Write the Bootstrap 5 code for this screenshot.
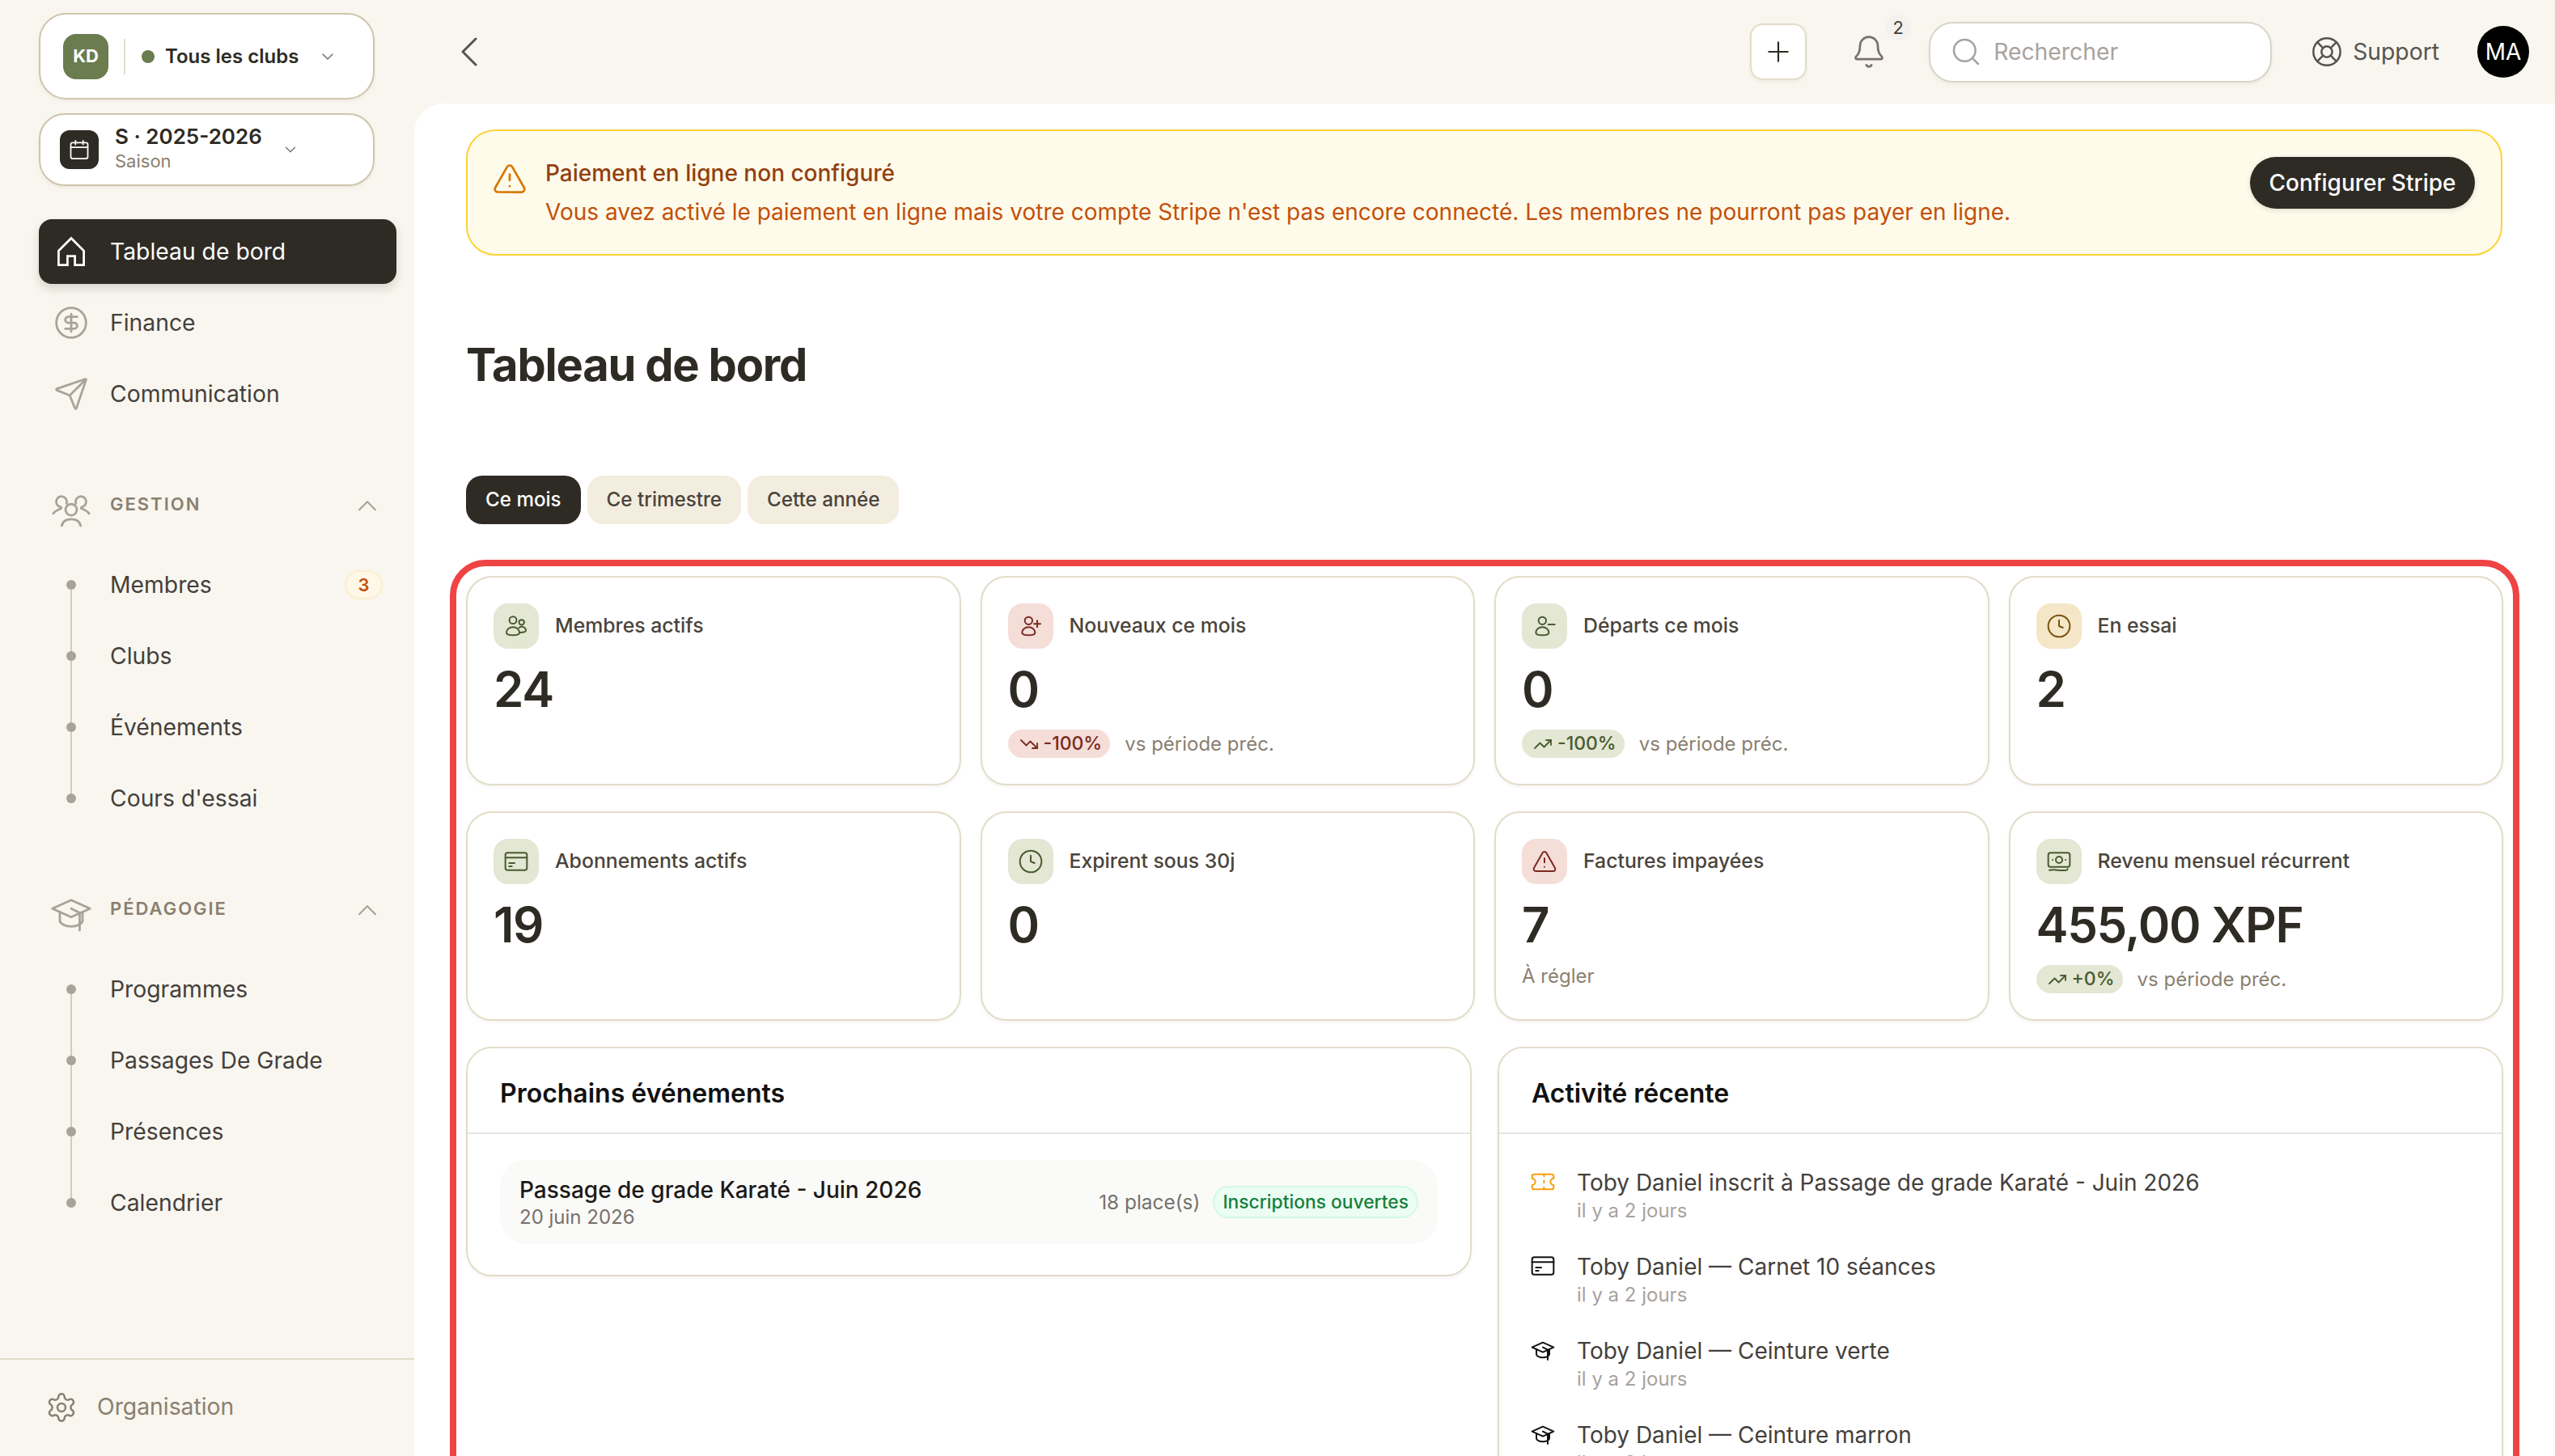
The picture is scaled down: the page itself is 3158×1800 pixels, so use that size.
<!DOCTYPE html>
<html lang="fr">
<head>
<meta charset="utf-8">
<title>Tableau de bord</title>
<link href="https://cdn.jsdelivr.net/npm/bootstrap@5.3.0/dist/css/bootstrap.min.css" rel="stylesheet">
<style>
html,body{height:100%;margin:0}
body{font-family:"Inter","Liberation Sans",sans-serif;background:#f9f6ef;color:#2e2b24;overflow:hidden}
.ic{fill:none;stroke:currentColor;stroke-width:1.5;stroke-linecap:round;stroke-linejoin:round;flex:none}
.sym-defs{width:0;height:0;position:absolute}
.shell{height:1800px}
.side{width:512px;flex:none;height:1800px}
.side-top{padding:16px 22px 0 48px}
.pick{width:415px;background:#fff;border:2px solid #cfc5ab;box-shadow:0 2px 4px rgba(46,43,36,.06)}
.pick-club{height:107px;border-radius:34px;padding-left:28px}
.club-ava{width:56px;height:56px;border-radius:16px;background:#6b7c4f;color:#fff;font-size:22px;font-weight:700}
.club-sep{width:2px;height:44px;background:#e3dcc8;margin:0 20px 0 19px}
.club-dot{width:16px;height:16px;border-radius:50%;background:#6b7c4f;margin-right:13px}
.club-name{font-size:24px;font-weight:600;color:#2e2b24}
.pick-season{height:90px;border-radius:32px;padding-left:24px;margin-top:17px}
.season-ico{width:48px;height:48px;border-radius:12px;background:#2e2b24;color:#fff;margin-right:20px}
.season-txt{padding-bottom:4px}
.season-name{font-size:26px;font-weight:600;line-height:32px;color:#2e2b24}
.season-sub{font-size:22px;line-height:28px;color:#8a7f70}
.chev{color:#78716c}
.menu{margin-top:41px;gap:8px}
.menu-link{height:80px;border-radius:16px;font-size:28.3px;color:#44403c;padding-left:18px;text-decoration:none}
.menu-link .ic{color:#a8a29a;margin-right:26px;stroke-width:1.5}
.menu-link.on{background:#2e2b24;color:#fff;box-shadow:0 6px 12px rgba(46,43,36,.16)}
.menu-link.on .ic{color:#fff}
.sect-head{height:48px;margin-top:72px;padding-left:12px;padding-right:19px}
.sect-ico{color:#a8a29a;margin-right:20px;margin-top:12px;stroke-width:1.2}
.sect-name{font-size:22px;font-weight:600;letter-spacing:2px;color:#8a7f70}
.sect-caret{margin-left:auto;color:#a8a29a;margin-top:6px}
.sub-list{margin-top:36px;gap:8px;background:linear-gradient(#d0ccc3,#d0ccc3) no-repeat 39px 40px/2px calc(100% - 80px)}
.sub-link{height:80px;font-size:28.3px;color:#44403c;text-decoration:none;padding-left:34px}
.sub-dot{width:12px;height:12px;border-radius:50%;background:#a8a29a;margin-right:42px}
.sub-count{margin-left:auto;margin-right:17px;width:47px;height:36px;background:#fff8e6;border:2px solid #fdeed0;border-radius:18px;color:#c2500a;font-size:22px;font-weight:600;padding:0;line-height:32px}
.side-foot{margin-top:auto;border-top:2px solid #e3dcc8;height:121px;padding-left:56px;padding-bottom:2px;color:#8a7f70;font-size:28.3px}
.side-foot .ic{margin-right:24px}
.side-nav-wrap{flex:1}
.top{height:128px;flex:none;padding-right:32px}
.back{margin-left:56px;color:#57534e}
.add-btn{width:70px;height:70px;border-radius:16px;border:2px solid #e3dcc8;background:#fff;color:#2e2b24;padding:0;box-shadow:0 2px 4px rgba(46,43,36,.06)}
.add-btn .ic{stroke-width:1.3}
.bell-wrap{margin-left:55px;margin-right:52px;color:#78716c}
.bell-num{position:absolute;top:-24px;right:-30px;width:32px;height:32px;border-radius:50%;background:#f3f2ee;color:#44403c;font-size:22px;font-weight:400;padding:0;line-height:32px}
.find{width:424px;height:75px;border-radius:30px;background:#fff;border:2px solid #dad5ca;padding-left:24px;color:#a8a29e;font-size:28.3px;box-shadow:0 2px 4px rgba(46,43,36,.06)}
.find .ic{margin-right:14px}
.help{margin-left:48px;margin-right:47px;font-size:28.3px;color:#57534e}
.help .ic{margin-right:12px}
.me{width:64px;height:64px;border-radius:50%;background:#000;color:#fff;font-size:28px}
.page{flex:1;background:#fff;border-top-left-radius:36px;padding:32px 65px 0 64px;overflow:hidden;min-width:0}
.warn{height:156px;background:#fffbeb;border:2px solid #fdd235;border-radius:36px;padding:0 32px 0 30px;margin-bottom:0}
.warn-ico{color:#d97706;margin-right:22px;align-self:flex-start;margin-top:37px}
.warn-title{font-size:28px;font-weight:500;color:#92400e;line-height:40px}
.warn-text{font-size:28px;color:#c2500a;line-height:40px;margin-top:8px}
.warn-btn{background:#2e2b24;color:#fff;border:0;border-radius:32px;height:64px;width:278px;font-size:28px;font-weight:500;padding:0;margin-left:auto;margin-top:-24px;box-shadow:0 2px 6px rgba(46,43,36,.15)}
.head-title{font-size:56px;font-weight:700;letter-spacing:-1.2px;color:#2e2b24;line-height:72px;margin:99px 0 0 0}
.ranges{margin-top:101px;gap:8px}
.range{height:60px;border-radius:20px;padding:0 24px;font-size:24.2px;font-weight:500;background:#f3ede0;color:#4a443b;border:0}
.range.on{background:#2e2b24;color:#fff}
.frame{margin:44px -21px 0 -20px;border:8px solid #ef4444;border-radius:44px;padding:12px;height:1200px}
.stats{--bs-gutter-x:24px;--bs-gutter-y:32px}
.tile{border:2px solid #e3dcc8;border-radius:32px;padding:32px;box-shadow:0 2px 4px rgba(46,43,36,.05)}
.tile-ico{width:56px;height:56px;border-radius:18px;margin-right:20px}
.tone-g{background:#e3e7d3;color:#4a5a30}
.tone-r{background:#f5ddd8;color:#7a2a20}
.tone-y{background:#f5e6c8;color:#7a5210}
.tile-label{font-size:24.8px;font-weight:500;color:#4a443b}
.tile-val{font-size:60px;font-weight:600;letter-spacing:-1.3px;line-height:72px;margin-top:14px;color:#2e2b24}
.delta-row{margin-top:14px;height:35px}
.delta{height:35px;border-radius:18px;padding:0 10px 0 14px;font-size:23px;font-weight:500;gap:6px}
.delta .ic{stroke-width:1.8}
.delta-note{font-size:24px;color:#8a7f70;margin-left:18px}
.tile-note{font-size:24px;line-height:36px;margin-top:10px;color:#8a7f70}
.lower{--bs-gutter-x:32px;--bs-gutter-y:0;margin-top:32px}
.panel{border:2px solid #e3dcc8;border-radius:32px;overflow:hidden;box-shadow:0 2px 4px rgba(46,43,36,.05)}
.panel-head{background:#fff;border-bottom:2px solid #e7e5e4;height:106px;padding:8px 40px 0;border-radius:0}
.panel-title{font-size:32px;font-weight:600;color:#111;margin:0}
.panel-body{padding:32px 40px 38px}
.event{height:104px;background:#fafaf8;border-radius:32px;padding:0 24px}
.event-name{font-size:28px;font-weight:500;color:#1c1917;line-height:38px}
.event-date{font-size:24px;color:#78716c;line-height:30px}
.event-seats{font-size:24.4px;color:#78716c;margin-right:16px}
.event-state{height:40px;border-radius:20px;background:#ecfdf3;border:2px solid #d1fae5;color:#15803d;font-size:22.8px;font-weight:500;padding:0 10px;line-height:36px}
.feed{gap:18px}
.feed-item{padding:8px 0;gap:26px}
.feed-ico{margin-top:3px;margin-left:-2px;color:#111}
.feed-ico.orange{color:#f59e0b}
.feed-text{font-size:28px;color:#44403c;line-height:40px}
.feed-when{font-size:24px;color:#a8a29e;line-height:30px}
.panel-wide{height:1000px}
</style>
</head>
<body>
<svg class="sym-defs" aria-hidden="true">
  <symbol id="i-home" viewBox="0 0 24 24"><path d="M3.5 11.5 12 3l8.5 8.5V21h-6v-6h-5v6h-6z" stroke-linejoin="miter"/></symbol>
  <symbol id="i-dollar" viewBox="0 0 24 24"><circle cx="12" cy="12" r="10"/><path d="M16 8h-6a2 2 0 1 0 0 4h4a2 2 0 1 1 0 4H8"/><path d="M12 18V6"/></symbol>
  <symbol id="i-send" viewBox="0 0 24 24"><path d="M14.536 21.686a.5.5 0 0 0 .937-.024l6.5-19a.496.496 0 0 0-.635-.635l-19 6.5a.5.5 0 0 0-.024.937l7.93 3.18a2 2 0 0 1 1.112 1.11z"/><path d="m21.854 2.147-10.94 10.939"/></symbol>
  <symbol id="i-team" viewBox="0 0 24 24"><circle cx="12" cy="12.500" r="3"/><path d="M7 21c.5-2.500 2.500-3.500 5-3.500s4.500 1 5 3.500"/><path d="M9.500 9.200A2.800 2.800 0 1 0 6.300 11c.6.300.6.800 0 1-1.500.500-2.800 1.200-3.800 2.500"/><path d="M14.500 9.200a2.800 2.800 0 1 1 3.200 1.800c-.6.300-.6.800 0 1 1.500.500 2.800 1.200 3.800 2.500"/></symbol>
  <symbol id="i-cap" viewBox="0 0 24 24"><path d="M2 9.500 12 5l10 4.500L12 14z"/><path d="M6 11.500V16c0 1.500 3 3 6 3 3 0 6-1.500 6-3v-4.500"/><path d="m12 9.500 4.500 2.300V21"/></symbol>
  <symbol id="i-gear" viewBox="0 0 24 24"><path d="M12.220 2h-.44a2 2 0 0 0-2 2v.18a2 2 0 0 1-1 1.730l-.43.25a2 2 0 0 1-2 0l-.15-.08a2 2 0 0 0-2.730.73l-.22.38a2 2 0 0 0 .73 2.730l.15.1a2 2 0 0 1 1 1.720v.51a2 2 0 0 1-1 1.740l-.15.09a2 2 0 0 0-.73 2.730l.22.38a2 2 0 0 0 2.730.73l.15-.08a2 2 0 0 1 2 0l.43.25a2 2 0 0 1 1 1.730V20a2 2 0 0 0 2 2h.44a2 2 0 0 0 2-2v-.18a2 2 0 0 1 1-1.730l.43-.25a2 2 0 0 1 2 0l.15.08a2 2 0 0 0 2.730-.73l.22-.39a2 2 0 0 0-.73-2.730l-.15-.08a2 2 0 0 1-1-1.740v-.5a2 2 0 0 1 1-1.740l.15-.09a2 2 0 0 0 .73-2.730l-.22-.38a2 2 0 0 0-2.730-.73l-.15.08a2 2 0 0 1-2 0l-.43-.25a2 2 0 0 1-1-1.730V4a2 2 0 0 0-2-2z"/><circle cx="12" cy="12" r="3"/></symbol>
  <symbol id="i-down" viewBox="0 0 24 24"><path d="m6 9 6 6 6-6"/></symbol>
  <symbol id="i-up" viewBox="0 0 24 24"><path d="m5 15 7-7 7 7"/></symbol>
  <symbol id="i-cal" viewBox="0 0 24 24"><rect x="3" y="4.500" width="18" height="17" rx="2"/><path d="M3 9.500h18M8 2.500v4M16 2.500v4"/></symbol>
  <symbol id="i-plus" viewBox="0 0 24 24"><path d="M5 12h14M12 5v14"/></symbol>
  <symbol id="i-bell" viewBox="0 0 24 24"><path d="M10.268 21a2 2 0 0 0 3.464 0"/><path d="M3.262 15.326A1 1 0 0 0 4 17h16a1 1 0 0 0 .74-1.673C19.410 13.956 18 12.499 18 8A6 6 0 0 0 6 8c0 4.499-1.411 5.956-2.738 7.326"/></symbol>
  <symbol id="i-search" viewBox="0 0 24 24"><circle cx="11" cy="11" r="8"/><path d="m21 21-4.300-4.300"/></symbol>
  <symbol id="i-buoy" viewBox="0 0 24 24"><circle cx="12" cy="12" r="10"/><circle cx="12" cy="12" r="4"/><path d="m4.930 4.930 4.240 4.240M14.830 9.170l4.240-4.240M14.830 14.830l4.240 4.240M9.170 14.830l-4.240 4.240"/></symbol>
  <symbol id="i-alert" viewBox="0 0 24 24"><path d="m21.730 18-8-14a2 2 0 0 0-3.480 0l-8 14A2 2 0 0 0 4 21h16a2 2 0 0 0 1.730-3"/><path d="M12 9v4M12 17h.01"/></symbol>
  <symbol id="i-users" viewBox="0 0 24 24"><circle cx="9" cy="6.500" r="3.300"/><circle cx="17" cy="8.500" r="2.400"/><path d="M3 18c0-3 2.700-5 6-5s6 2 6 5c0 1.500-2.500 2.500-6 2.500S3 19.500 3 18z"/><path d="M14.500 13.600c.7-.7 1.600-1.100 2.700-1.100 2.200 0 3.800 1.700 3.800 3.500 0 1.400-2 2-5.300 2"/></symbol>
  <symbol id="i-uplus" viewBox="0 0 24 24"><circle cx="10" cy="7" r="3.500"/><path d="M4 18c0-3 2.700-5 6-5s6 2 6 5c0 1.500-2.500 2.500-6 2.500S4 19.500 4 18z"/><path d="M18 7v6M15 10h6"/></symbol>
  <symbol id="i-uminus" viewBox="0 0 24 24"><circle cx="10" cy="7" r="3.500"/><path d="M4 18c0-3 2.700-5 6-5s6 2 6 5c0 1.500-2.500 2.500-6 2.500S4 19.500 4 18z"/><path d="M15.500 10.500h6"/></symbol>
  <symbol id="i-clock" viewBox="0 0 24 24"><circle cx="12" cy="12" r="10"/><path d="M12 6.500V12l3.500 1.500"/></symbol>
  <symbol id="i-card" viewBox="0 0 24 24"><rect x="2" y="4" width="20" height="16" rx="2"/><path d="M2 8.500h20M5.500 13.500h5M5.500 16.500h2.500"/></symbol>
  <symbol id="i-money" viewBox="0 0 24 24"><rect x="2" y="4" width="20" height="13" rx="2"/><circle cx="12" cy="10.500" r="3"/><path d="M6 10.500h.01M18 10.500h.01M3 20c5-1 9 .8 15 .2 1 0 2-.7 2-1.200"/></symbol>
  <symbol id="i-trup" viewBox="0 0 24 24"><path d="M22 7l-8.500 8.500-5-5L2 17"/><path d="M16 7h6v6"/></symbol>
  <symbol id="i-trdown" viewBox="0 0 24 24"><path d="m22 17-8.500-8.500-5 5L2 7"/><path d="M16 17h6v-6"/></symbol>
  <symbol id="i-ticket" viewBox="0 0 24 24"><path d="M2 9a3 3 0 0 1 0 6v2a2 2 0 0 0 2 2h16a2 2 0 0 0 2-2v-2a3 3 0 0 1 0-6V7a2 2 0 0 0-2-2H4a2 2 0 0 0-2 2Z"/><path d="M13 5v2M13 17v2M13 11v2"/></symbol>
</svg>

<div class="shell d-flex">
  <aside class="side d-flex flex-column">
    <div class="side-top side-nav-wrap">
      <div class="pick pick-club d-flex align-items-center">
        <div class="club-ava d-flex align-items-center justify-content-center">KD</div>
        <div class="club-sep"></div>
        <span class="club-dot"></span>
        <span class="club-name">Tous les clubs</span>
        <svg class="ic chev ms-4" width="24" height="24"><use href="#i-down"/></svg>
      </div>
      <div class="pick pick-season d-flex align-items-center">
        <div class="season-ico d-flex align-items-center justify-content-center"><svg class="ic" width="28" height="28"><use href="#i-cal"/></svg></div>
        <div class="season-txt">
          <div class="season-name">S · 2025-2026</div>
          <div class="season-sub">Saison</div>
        </div>
        <svg class="ic chev ms-4" width="22" height="22"><use href="#i-down"/></svg>
      </div>
      <nav class="menu d-flex flex-column">
        <a class="menu-link on d-flex align-items-center" href="#"><svg class="ic" width="44" height="44"><use href="#i-home"/></svg>Tableau de bord</a>
        <a class="menu-link d-flex align-items-center" href="#"><svg class="ic" width="44" height="44"><use href="#i-dollar"/></svg>Finance</a>
        <a class="menu-link d-flex align-items-center" href="#"><svg class="ic" width="44" height="44"><use href="#i-send"/></svg>Communication</a>
      </nav>
      <div class="sect-head d-flex align-items-center">
        <svg class="ic sect-ico" width="56" height="56"><use href="#i-team"/></svg>
        <span class="sect-name">GESTION</span>
        <svg class="ic sect-caret" width="34" height="34"><use href="#i-up"/></svg>
      </div>
      <div class="sub-list d-flex flex-column">
        <a class="sub-link d-flex align-items-center" href="#"><span class="sub-dot"></span>Membres<span class="badge sub-count">3</span></a>
        <a class="sub-link d-flex align-items-center" href="#"><span class="sub-dot"></span>Clubs</a>
        <a class="sub-link d-flex align-items-center" href="#"><span class="sub-dot"></span>Événements</a>
        <a class="sub-link d-flex align-items-center" href="#"><span class="sub-dot"></span>Cours d'essai</a>
      </div>
      <div class="sect-head d-flex align-items-center">
        <svg class="ic sect-ico" width="56" height="56"><use href="#i-cap"/></svg>
        <span class="sect-name">PÉDAGOGIE</span>
        <svg class="ic sect-caret" width="34" height="34"><use href="#i-up"/></svg>
      </div>
      <div class="sub-list d-flex flex-column">
        <a class="sub-link d-flex align-items-center" href="#"><span class="sub-dot"></span>Programmes</a>
        <a class="sub-link d-flex align-items-center" href="#"><span class="sub-dot"></span>Passages De Grade</a>
        <a class="sub-link d-flex align-items-center" href="#"><span class="sub-dot"></span>Présences</a>
        <a class="sub-link d-flex align-items-center" href="#"><span class="sub-dot"></span>Calendrier</a>
      </div>
    </div>
    <div class="side-foot d-flex align-items-center"><svg class="ic" width="40" height="40"><use href="#i-gear"/></svg>Organisation</div>
  </aside>

  <div class="d-flex flex-column flex-grow-1" style="min-width:0">
    <header class="top d-flex align-items-center">
      <svg class="ic back" width="24" height="36" viewBox="0 0 24 36" style="stroke-width:3"><path d="M20 2 4 18l16 16"/></svg>
      <button class="btn add-btn ms-auto d-flex align-items-center justify-content-center" type="button"><svg class="ic" width="40" height="40"><use href="#i-plus"/></svg></button>
      <div class="bell-wrap position-relative d-flex"><svg class="ic" width="44" height="44"><use href="#i-bell"/></svg><span class="badge bell-num">2</span></div>
      <div class="find d-flex align-items-center"><svg class="ic" width="40" height="40"><use href="#i-search"/></svg>Rechercher</div>
      <div class="help d-flex align-items-center"><svg class="ic" width="40" height="40"><use href="#i-buoy"/></svg>Support</div>
      <div class="me d-flex align-items-center justify-content-center">MA</div>
    </header>

    <main class="page">
      <div class="warn alert d-flex align-items-center" role="alert">
        <svg class="ic warn-ico" width="44" height="44"><use href="#i-alert"/></svg>
        <div>
          <div class="warn-title">Paiement en ligne non configuré</div>
          <div class="warn-text">Vous avez activé le paiement en ligne mais votre compte Stripe n'est pas encore connecté. Les membres ne pourront pas payer en ligne.</div>
        </div>
        <button class="btn warn-btn" type="button">Configurer Stripe</button>
      </div>

      <h1 class="head-title">Tableau de bord</h1>

      <div class="ranges d-flex">
        <button class="btn range on" type="button">Ce mois</button>
        <button class="btn range" type="button">Ce trimestre</button>
        <button class="btn range" type="button">Cette année</button>
      </div>

      <div class="frame">
        <div class="row row-cols-4 stats">
          <div class="col"><div class="card tile h-100">
            <div class="d-flex align-items-center"><div class="tile-ico tone-g d-flex align-items-center justify-content-center"><svg class="ic" width="32" height="32"><use href="#i-users"/></svg></div><span class="tile-label">Membres actifs</span></div>
            <div class="tile-val">24</div>
          </div></div>
          <div class="col"><div class="card tile h-100">
            <div class="d-flex align-items-center"><div class="tile-ico tone-r d-flex align-items-center justify-content-center"><svg class="ic" width="32" height="32"><use href="#i-uplus"/></svg></div><span class="tile-label">Nouveaux ce mois</span></div>
            <div class="tile-val">0</div>
            <div class="delta-row d-flex align-items-center"><span class="delta tone-r d-flex align-items-center"><svg class="ic" width="24" height="24"><use href="#i-trdown"/></svg>-100%</span><span class="delta-note">vs période préc.</span></div>
          </div></div>
          <div class="col"><div class="card tile h-100">
            <div class="d-flex align-items-center"><div class="tile-ico tone-g d-flex align-items-center justify-content-center"><svg class="ic" width="32" height="32"><use href="#i-uminus"/></svg></div><span class="tile-label">Départs ce mois</span></div>
            <div class="tile-val">0</div>
            <div class="delta-row d-flex align-items-center"><span class="delta tone-g d-flex align-items-center"><svg class="ic" width="24" height="24"><use href="#i-trup"/></svg>-100%</span><span class="delta-note">vs période préc.</span></div>
          </div></div>
          <div class="col"><div class="card tile h-100">
            <div class="d-flex align-items-center"><div class="tile-ico tone-y d-flex align-items-center justify-content-center"><svg class="ic" width="32" height="32"><use href="#i-clock"/></svg></div><span class="tile-label">En essai</span></div>
            <div class="tile-val">2</div>
          </div></div>
          <div class="col"><div class="card tile h-100">
            <div class="d-flex align-items-center"><div class="tile-ico tone-g d-flex align-items-center justify-content-center"><svg class="ic" width="32" height="32"><use href="#i-card"/></svg></div><span class="tile-label">Abonnements actifs</span></div>
            <div class="tile-val">19</div>
          </div></div>
          <div class="col"><div class="card tile h-100">
            <div class="d-flex align-items-center"><div class="tile-ico tone-g d-flex align-items-center justify-content-center"><svg class="ic" width="32" height="32"><use href="#i-clock"/></svg></div><span class="tile-label">Expirent sous 30j</span></div>
            <div class="tile-val">0</div>
          </div></div>
          <div class="col"><div class="card tile h-100">
            <div class="d-flex align-items-center"><div class="tile-ico tone-r d-flex align-items-center justify-content-center"><svg class="ic" width="32" height="32"><use href="#i-alert"/></svg></div><span class="tile-label">Factures impayées</span></div>
            <div class="tile-val">7</div>
            <div class="tile-note">À régler</div>
          </div></div>
          <div class="col"><div class="card tile h-100">
            <div class="d-flex align-items-center"><div class="tile-ico tone-g d-flex align-items-center justify-content-center"><svg class="ic" width="32" height="32"><use href="#i-money"/></svg></div><span class="tile-label">Revenu mensuel récurrent</span></div>
            <div class="tile-val">455,00 XPF</div>
            <div class="delta-row d-flex align-items-center"><span class="delta tone-g d-flex align-items-center"><svg class="ic" width="24" height="24"><use href="#i-trup"/></svg>+0%</span><span class="delta-note">vs période préc.</span></div>
          </div></div>
        </div>

        <div class="row row-cols-2 lower align-items-start">
          <div class="col"><div class="card panel">
            <div class="card-header panel-head d-flex align-items-center"><h2 class="panel-title">Prochains événements</h2></div>
            <div class="panel-body">
              <div class="event d-flex align-items-center">
                <div>
                  <div class="event-name">Passage de grade Karaté - Juin 2026</div>
                  <div class="event-date">20 juin 2026</div>
                </div>
                <span class="event-seats ms-auto">18 place(s)</span>
                <span class="event-state">Inscriptions ouvertes</span>
              </div>
            </div>
          </div></div>
          <div class="col"><div class="card panel panel-wide">
            <div class="card-header panel-head d-flex align-items-center"><h2 class="panel-title">Activité récente</h2></div>
            <div class="panel-body">
              <div class="feed d-flex flex-column">
                <div class="feed-item d-flex"><svg class="ic feed-ico orange" width="32" height="32"><use href="#i-ticket"/></svg><div><div class="feed-text">Toby Daniel inscrit à Passage de grade Karaté - Juin 2026</div><div class="feed-when">il y a 2 jours</div></div></div>
                <div class="feed-item d-flex"><svg class="ic feed-ico" width="32" height="32"><use href="#i-card"/></svg><div><div class="feed-text">Toby Daniel — Carnet 10 séances</div><div class="feed-when">il y a 2 jours</div></div></div>
                <div class="feed-item d-flex"><svg class="ic feed-ico" width="32" height="32"><use href="#i-cap"/></svg><div><div class="feed-text">Toby Daniel — Ceinture verte</div><div class="feed-when">il y a 2 jours</div></div></div>
                <div class="feed-item d-flex"><svg class="ic feed-ico" width="32" height="32"><use href="#i-cap"/></svg><div><div class="feed-text">Toby Daniel — Ceinture marron</div><div class="feed-when">il y a 2 jours</div></div></div>
              </div>
            </div>
          </div></div>
        </div>
      </div>
    </main>
  </div>
</div>
<script src="https://cdn.jsdelivr.net/npm/bootstrap@5.3.0/dist/js/bootstrap.bundle.min.js"></script>
</body>
</html>
